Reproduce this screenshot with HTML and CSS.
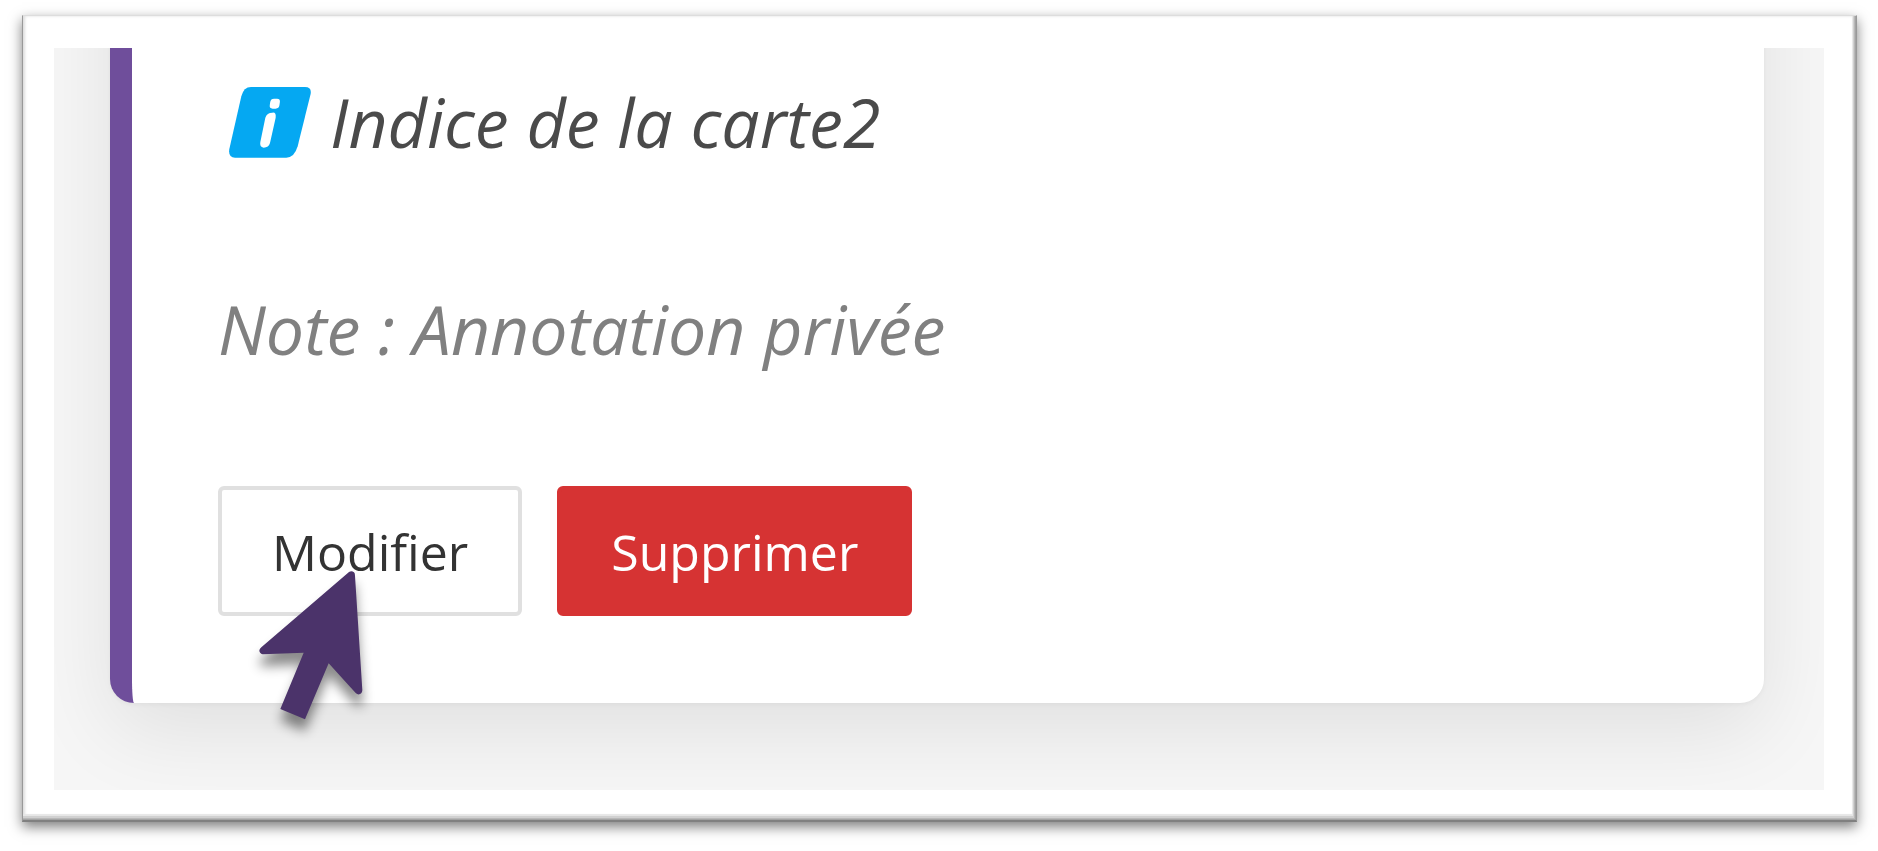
FILE: index.html
```html
<!DOCTYPE html>
<html lang="fr">
<head>
  <meta charset="UTF-8">
  <meta name="viewport" content="width=device-width, initial-scale=1.0">
  <title>Carte</title>
  <link rel="stylesheet" href="styles.css">
</head>
<body>
  <div class="frame">
    <div class="page">
      <div class="card">
        <p class="hint">
          <svg class="hint-icon" viewBox="0 0 246 213" aria-hidden="true">
            <path d="M66 0H228Q248 0 245 20L206 178Q196 212 172 212H18Q-3 211 1 186L37 28Q44 0 66 0Z" fill="#05a8f2"/>
            <rect x="125" y="35" width="29" height="30" rx="10" transform="skewX(-8) translate(5 0)" fill="#fff"/>
            <path d="M130 77Q142 75 140 92L123 168Q119 182 104 182Q91 180 94 165L109 92Q114 77 130 77Z" fill="#fff"/>
          </svg>
          <span>Indice de la carte2</span>
        </p>
        <p class="note">Note : Annotation privée</p>
        <div class="actions">
          <button type="button" class="btn">Modifier</button>
          <button type="button" class="btn btn-danger">Supprimer</button>
          <svg class="cursor" viewBox="170 290 330 468" aria-hidden="true">
            <path d="M449 305Q457 300 464 306Q467 309 467 316L489 660Q488 670 480 672Q474 673 469 668L388 579L317 747L243 716L313 547L190 552Q180 549 180 540Q181 535 186 531Z" fill="#4b336a"/>
          </svg>
        </div>
      </div>
    </div>
  </div>
</body>
</html>
```
FILE: styles.css
```css
body {
  background-color: #fff;
  font-family: 'Open Sans', 'Noto Sans', sans-serif;
  margin: 0;
}

.frame {
  margin: 15px 21px 27px 22px;
  padding: 32px 32px 30px 31px;
  background-color: #fff;
  border: 1px solid #999;
  border-top-color: #ddd;
  border-bottom: 2px solid #808080;
  box-shadow:
    inset -1px -1px 0 #a4a4a4,
    inset -2px -2px 0 #b8b8b8,
    inset -3px -4px 0 #d0d0d0,
    inset -4px -6px 1px #e6e6e6,
    inset 2px 0 3px #ddd,
    0 5px 12px rgba(0, 0, 0, 0.5);
}

.page {
  background-color: #f6f6f6;
  padding: 0 60px 87px 56px;
  overflow: hidden;
}

/* the top of the card runs out of the page */
.card {
  background-color: #fff;
  border-left: 22px solid #6f4e9b;
  border-radius: 24px;
  box-shadow: 0 28px 84px rgba(0, 0, 0, 0.09), 0 2px 4px rgba(0, 0, 0, 0.04);
  margin-top: -200px;
  padding: 224px 86px 87px;
}

.hint,
.note {
  margin: 0 0 107px;
  font-size: 68px;
  font-style: italic;
  line-height: 100px;
}

.hint {
  display: flex;
  align-items: center;
  gap: 19px;
  padding-left: 11px;
  color: #4a4a4a;
}

.hint-icon {
  width: 82px;
  height: 71px;
}

.note {
  color: #808080;
}

.actions {
  display: flex;
  gap: 35px;
  position: relative;
}

.btn {
  height: 130px;
  padding: 2px 50px 0;
  border: 4px solid #e0e0e0;
  border-radius: 6px;
  background-color: #fff;
  color: #333;
  font-family: inherit;
  font-size: 50px;
  cursor: pointer;
}

.btn-danger {
  border-color: #d63333;
  background-color: #d63333;
  color: #fff;
  font-weight: 500;
}

.cursor {
  position: absolute;
  left: 38px;
  top: 81px;
  width: 110px;
  height: 156px;
  overflow: visible;
  filter: drop-shadow(0 12px 6px rgba(0, 0, 0, 0.45));
  pointer-events: none;
}
```
